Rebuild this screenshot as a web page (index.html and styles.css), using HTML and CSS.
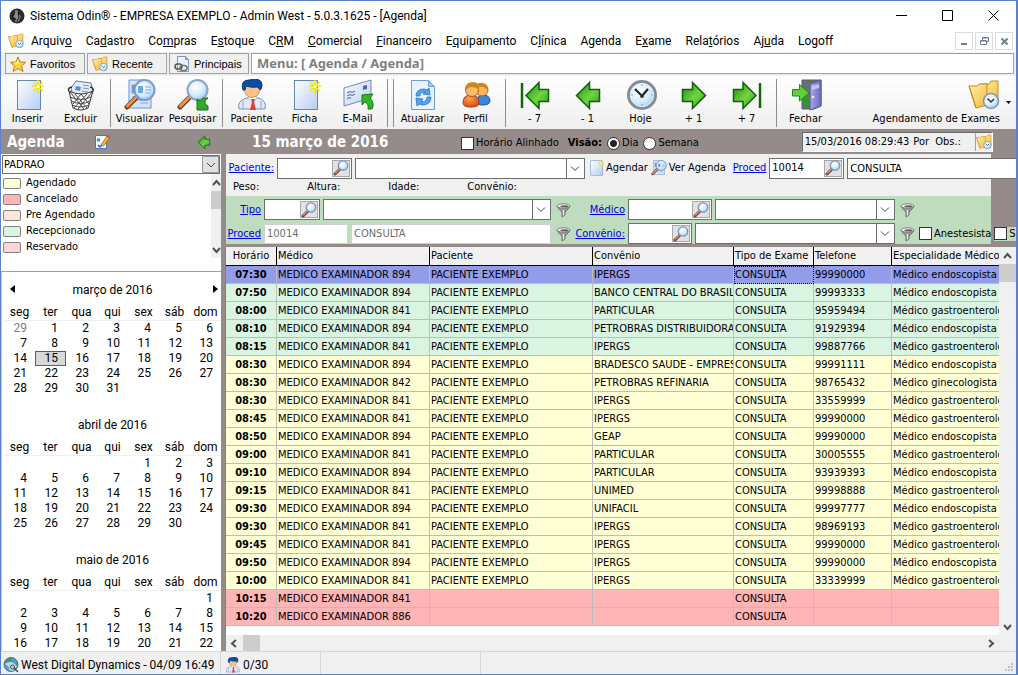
FILE: index.html
```
<!DOCTYPE html>
<html lang="pt-BR">
<head>
  <meta charset="UTF-8">
  <meta name="viewport" content="width=device-width, initial-scale=1.0">
  <title>Sistema Odin - Agenda</title>
  <link rel="stylesheet" href="styles.css">
</head>
<body>
  <!-- icons -->
  <svg class="sprite" width="0" height="0" aria-hidden="true">
    <defs>
      <linearGradient id="g-green" x1="0" y1="0" x2="1" y2="1">
        <stop offset="0" stop-color="#1f8a12"/><stop offset=".55" stop-color="#6fd640"/><stop offset="1" stop-color="#2f9a18"/>
      </linearGradient>
      <linearGradient id="g-page" x1="0" y1="0" x2="1" y2="1">
        <stop offset="0" stop-color="#fff"/><stop offset="1" stop-color="#b4cdf2"/>
      </linearGradient>
      <linearGradient id="g-folder" x1="0" y1="0" x2="1" y2="1">
        <stop offset="0" stop-color="#fff3a8"/><stop offset="1" stop-color="#f2b93a"/>
      </linearGradient>
      <linearGradient id="g-door" x1="0" y1="0" x2="1" y2="0">
        <stop offset="0" stop-color="#a9a7e6"/><stop offset="1" stop-color="#6f6cbb"/>
      </linearGradient>
      <radialGradient id="g-glass" cx=".4" cy=".35" r=".7">
        <stop offset="0" stop-color="#fff"/><stop offset=".6" stop-color="#d3ecfb"/><stop offset="1" stop-color="#96c6ee"/>
      </radialGradient>
      <radialGradient id="g-orange" cx=".4" cy=".3" r=".8">
        <stop offset="0" stop-color="#ffa04c"/><stop offset="1" stop-color="#cf4510"/>
      </radialGradient>
    </defs>

    <symbol id="i-new" viewBox="0 0 32 32">
      <rect x="5.500" y="1.500" width="23" height="29" fill="url(#g-page)" stroke="#6585b8"/>
      <path d="M26 1v13M20 7h12M21.500 3l9 9M30.500 3l-9 9" stroke="#f0e800" stroke-width="1.600"/>
      <circle cx="26" cy="7.500" r="1.500" fill="#fff"/>
    </symbol>
    <symbol id="i-trash" viewBox="0 0 32 32">
      <path d="M6 9l5-7 15 2 2 8-3 5H8z" fill="#e4edf9" stroke="#687790"/>
      <path d="M11 7l5 1-1 4-5-1z" fill="#4d90d8"/>
      <path d="M18 6l6 1M18 9l6 1M17 12l6 1" stroke="#7894b8"/>
      <path d="M4 12l4 17q8 4 15 0l5-17q-12 6-24 0z" fill="#fff" fill-opacity=".8" stroke="#333"/>
      <path d="M5 13l14 17M10 15l12 14M16 15l8 10M27 13L13 30M22 15L9 29M16 15l-8 10M5 18q11 5 21 0M6 22q10 5 19 0M7 26q9 4 17 0" fill="none" stroke="#4a4a4a"/>
      <path d="M4 12q-2-3 3-4M28 12q1-3-3-4" fill="none" stroke="#333" stroke-width="1.500"/>
    </symbol>
    <symbol id="i-view" viewBox="0 0 32 32">
      <path d="M5 1h17l5 5v23H5z" fill="#d4e5fa" stroke="#6d93cf"/>
      <path d="M8 6h3v8H8zM8 18h8M8 21h10M16 24h8M16 21h8" fill="#5b93da" stroke="#7da5dd"/>
      <path d="M3 28L13 18" stroke="#6d4630" stroke-width="5" stroke-linecap="round"/>
      <path d="M3.500 27L12.500 18" stroke="#ee9348" stroke-width="3" stroke-linecap="round"/>
      <circle cx="20.500" cy="11" r="10" fill="url(#g-glass)" fill-opacity=".85" stroke="#7d9cc9" stroke-width="2"/>
      <path d="M14 7h5v7h-5z" fill="#6fa8df"/><path d="M21 8h6M21 11h6M21 14h5" stroke="#84aede"/>
    </symbol>
    <symbol id="i-search" viewBox="0 0 32 32">
      <path d="M3 28L13 18" stroke="#6d4630" stroke-width="5" stroke-linecap="round"/>
      <path d="M3.500 27L12.500 18" stroke="#ee9348" stroke-width="3" stroke-linecap="round"/>
      <circle cx="20.500" cy="11" r="10" fill="url(#g-glass)" stroke="#8ba3cf" stroke-width="2"/>
      <path d="M20 31V20l3 2q3-4 8-3-4 2-3 6l3 2v4z" fill="#2eaa2a" stroke="#14741a"/>
    </symbol>
    <symbol id="i-lens" viewBox="0 0 16 16">
      <path d="M2 14l5-5" stroke="#6b4a43" stroke-width="3" stroke-linecap="round"/>
      <path d="M2 13.500l5-5" stroke="#d98c69" stroke-width="1.200"/>
      <circle cx="10" cy="5.500" r="4.700" fill="url(#g-glass)" stroke="#7d93c4" stroke-width="1.300"/>
    </symbol>
    <symbol id="i-doctor" viewBox="0 0 32 32">
      <path d="M3 30q-2-9 8-11h11q9 2 7 11z" fill="#e2eaf6" stroke="#7890b8"/>
      <path d="M12 19l4 5 5-5-1-3h-7z" fill="#fff" stroke="#93a7c6" stroke-width=".7"/>
      <path d="M15 20h4l-1 3 2 8h-6l2-8z" fill="#e3402c"/>
      <circle cx="16" cy="11" r="7.500" fill="#f8c28c" stroke="#b97b4a" stroke-width=".7"/>
      <path d="M7 11Q4 1 13 1q13-3 13 5 0 4-2 5l-2-3q-7 1-12-1l-1 4z" fill="#0b4da2" stroke="#08357a"/>
      <path d="M7 22v8M25 22v8" stroke="#8fa5c9"/>
    </symbol>
    <symbol id="i-mail" viewBox="0 0 32 32">
      <path d="M2 9l27-8v18L2 27z" fill="url(#g-page)" stroke="#7687b5"/>
      <path d="M5 14q2-2 4-1t4-1M5 17q2-2 4-1t4-1M5 20q2-2 4-1" fill="none" stroke="#4c5a80"/>
      <path d="M21 7l4-1v4l-4 1z" fill="#55649a"/>
      <path d="M20 16l11-1-3 4q5 5 2 11h-4q1-5-3-7l-3 3z" fill="#35b329" stroke="#147a15"/>
    </symbol>
    <symbol id="i-refresh" viewBox="0 0 32 32">
      <path d="M4.500 1.500h17l6 6v23h-23z" fill="#e9f2fd" stroke="#6f9bd6"/>
      <path d="M21.500 1.500v6h6z" fill="#a9c8ef" stroke="#6f9bd6"/>
      <path d="M9 17q0-7 8-7l3 1 2-2 1 7-7-1 2-2q-5 0-5 4zM24 18q0 8-9 8l-3-1-2 2-1-8 7 1-2 3q6 0 6-5z" fill="#55a4ea" stroke="#2a74c4" stroke-width=".8"/>
    </symbol>
    <symbol id="i-users" viewBox="0 0 32 32">
      <path d="M17 22q0-6 6-6 7 0 7 6 0 4-8 4-5 0-5-4z" fill="#3d86dd" stroke="#184f9c"/>
      <circle cx="22" cy="11" r="6" fill="#ffb45f" stroke="#a8641a"/>
      <path d="M16 8q1-5 7-4 6 1 5 9-2-5-6-5z" fill="#c98a1c"/>
      <path d="M3 24q0-8 8-8t8 8q0 4-8 4t-8-4z" fill="url(#g-orange)" stroke="#a53a10"/>
      <circle cx="12" cy="11" r="6.500" fill="#ffb96a" stroke="#a8641a"/>
      <path d="M5 9q1-6 8-6 7 0 6 8-3-3-7-3t-7 4z" fill="#c98a1c"/>
    </symbol>
    <symbol id="i-left" viewBox="0 0 32 32">
      <path d="M4.500 16.500L17.500 3.500v7h10v12h-10v7z" fill="url(#g-green)" stroke="#0f5f0d" stroke-width="1.500"/>
    </symbol>
    <symbol id="i-right" viewBox="0 0 32 32">
      <path d="M27.500 16.500L14.500 3.500v7h-10v12h10v7z" fill="url(#g-green)" stroke="#0f5f0d" stroke-width="1.500"/>
    </symbol>
    <symbol id="i-first" viewBox="0 0 32 32">
      <path d="M3 4v25" stroke="#0f6a0d" stroke-width="2.500"/>
      <path d="M7 16.500L20 3.500v7h9.500v12H20v7z" fill="url(#g-green)" stroke="#0f5f0d" stroke-width="1.500"/>
    </symbol>
    <symbol id="i-last" viewBox="0 0 32 32">
      <path d="M29 4v25" stroke="#0f6a0d" stroke-width="2.500"/>
      <path d="M25 16.500L12 3.500v7H2.500v12H12v7z" fill="url(#g-green)" stroke="#0f5f0d" stroke-width="1.500"/>
    </symbol>
    <symbol id="i-clock" viewBox="0 0 32 32">
      <circle cx="17" cy="16" r="13.500" fill="url(#g-glass)" stroke="#858c96" stroke-width="3"/>
      <circle cx="17" cy="16" r="11.500" fill="none" stroke="#e9f4fd"/>
      <path d="M10 10l7 7 6-7" fill="none" stroke="#222" stroke-width="2.200"/>
      <circle cx="17" cy="17" r="2" fill="#333"/>
      <path d="M17 5v2M17 25v2M6 16h2M26 16h2" stroke="#7aa6c9"/>
    </symbol>
    <symbol id="i-exit" viewBox="0 0 32 32">
      <path d="M12 1h19v26l-7 3H12z" fill="#66706d" stroke="#555c77"/>
      <path d="M13 18h8v8h-8z" fill="#2c9c26"/>
      <path d="M20 5l11-4v26l-11 4z" fill="url(#g-door)" stroke="#5654a0"/>
      <path d="M22 7l7-2v4l-7 2z" fill="#c3c2f2"/>
      <circle cx="23" cy="18" r="1.300" fill="#eee"/>
      <path d="M2.500 10.500h7v-5L19 14l-9.500 8v-5h-7z" fill="#5fd03a" stroke="#1c8a17"/>
    </symbol>
    <symbol id="i-folder" viewBox="0 0 32 32">
      <path d="M13 5h8l2-3h7v21l-17 3z" fill="url(#g-folder)" stroke="#c08a1e"/>
      <path d="M1 7h8l2-2h8v21L8 29z" fill="url(#g-folder)" stroke="#c08a1e"/>
      <path d="M1 7l7 22" stroke="#c08a1e"/>
      <circle cx="23" cy="22" r="7.500" fill="url(#g-glass)" stroke="#7f98b5" stroke-width="1.600"/>
      <path d="M19.500 19.500L23 23l3-3" fill="none" stroke="#333" stroke-width="1.500"/>
    </symbol>
    <symbol id="i-star" viewBox="0 0 16 16">
      <path d="M8 1l2 5 5.500.3-4 3.700 1.500 5.500L8 12.500 3 15.500 4.500 10 .5 6.300 6 6z" fill="#ffd43a" stroke="#b98208"/>
      <path d="M8 3l1 4-4 2 1-2-3-.5 3.500-.5z" fill="#fff3a0"/>
    </symbol>
    <symbol id="i-link" viewBox="0 0 16 16">
      <path d="M3.500.5h8l3 3v12h-11z" fill="#eef4fd" stroke="#7d98c6"/>
      <path d="M11.500.5v3h3z" fill="#a9c3e8" stroke="#7d98c6"/>
      <rect x="1" y="8" width="7" height="5" rx="2.500" fill="none" stroke="#555" stroke-width="1.500"/>
      <rect x="6" y="9.500" width="7" height="5" rx="2.500" fill="none" stroke="#777" stroke-width="1.500"/>
    </symbol>
    <symbol id="i-odin" viewBox="0 0 16 16">
      <circle cx="8" cy="8" r="7.500" fill="#2b2b2b"/>
      <path d="M6 2q4 0 3 4l3 2-2 5-4 1 1-4-3-1q3-3 2-7z" fill="#8d8d8d"/>
      <path d="M9 4l1 5-2 4M3 7l2 5" stroke="#111" fill="none"/>
    </symbol>
    <symbol id="i-globe" viewBox="0 0 16 16">
      <circle cx="8" cy="7.500" r="7" fill="#4f9ad2" stroke="#4a6f86"/>
      <path d="M3 3q4-3 6-1l-2 3-3 2zM9 8l5-2q1 4-3 7z" fill="#3f9a5a"/>
      <path d="M2 7q6-5 12 2l-4 5q-5 0-4-4z" fill="#dce3e6" fill-opacity=".85"/>
      <circle cx="9.500" cy="10" r="2" fill="none" stroke="#3a4a55"/>
      <path d="M11 11l4 4" stroke="#3a4a55" stroke-width="1.500"/>
    </symbol>
    <symbol id="i-funnel" viewBox="0 0 16 16">
      <path d="M1 4q1 3 5 6v5l3-2v-3q4-3 5-6z" fill="#9a9a9a" stroke="#5d5d5d" stroke-width=".8"/>
      <path d="M7.500 8v5.500" stroke="#f2f2f2" stroke-width="1.200"/>
      <ellipse cx="7.500" cy="4" rx="6.500" ry="2.200" fill="#f4f4f4" stroke="#6d6d6d" stroke-width=".8"/>
      <ellipse cx="8.500" cy="4.400" rx="4" ry="1.100" fill="#666"/>
    </symbol>
    <symbol id="i-edit" viewBox="0 0 16 16">
      <path d="M1.500 1.500h11v13h-11z" fill="#f4f8ff" stroke="#4a72c4"/>
      <path d="M3 4.500h3v3H3z" fill="#4a86df"/>
      <path d="M4 11l2 2 5-6" fill="none" stroke="#2f5fbd" stroke-width="1.500"/>
      <path d="M7 11l6-9 2.500 2-6 8z" fill="#f7b63a" stroke="#a86a16" stroke-width=".8"/>
      <path d="M13 2l1-1 2 2-1 1z" fill="#d63c3c"/>
    </symbol>
  </svg>

  <div class="window">
    <header class="titlebar">
      <svg class="icon16"><use href="#i-odin"/></svg>
      <h1 class="title">Sistema Odin® - EMPRESA EXEMPLO - Admin West - 5.0.3.1625 - [Agenda]</h1>
      <button class="winbtn" aria-label="Minimizar"><svg width="11" height="11"><path d="M0 5.500h11" stroke="#000"/></svg></button>
      <button class="winbtn" aria-label="Maximizar"><svg width="11" height="11"><path d="M.5.5h10v10H.5z" fill="none" stroke="#000"/></svg></button>
      <button class="winbtn" aria-label="Fechar"><svg width="11" height="11"><path d="M.5.5l10 10M10.500.5l-10 10" stroke="#000"/></svg></button>
    </header>

    <nav class="menubar">
      <svg class="icon16"><use href="#i-folder"/></svg>
      <a href="#">Arquiv<u>o</u></a>
      <a href="#">Ca<u>d</u>astro</a>
      <a href="#">Co<u>m</u>pras</a>
      <a href="#">E<u>s</u>toque</a>
      <a href="#">C<u>R</u>M</a>
      <a href="#"><u>C</u>omercial</a>
      <a href="#"><u>F</u>inanceiro</a>
      <a href="#">E<u>q</u>uipamento</a>
      <a href="#">C<u>l</u>ínica</a>
      <a href="#">A<u>g</u>enda</a>
      <a href="#">E<u>x</u>ame</a>
      <a href="#">Rela<u>t</u>órios</a>
      <a href="#">Aj<u>u</u>da</a>
      <a href="#">Logoff</a>
      <div class="mdi">
        <button aria-label="Minimizar agenda"><svg width="9" height="9"><path d="M1 7h6" stroke="#6f7f8f" stroke-width="2"/></svg></button>
        <button aria-label="Restaurar agenda"><svg width="9" height="9"><path d="M2.500 3V.5h6v4H7M.5 3.500h6v4h-6zM2 1h6M0 4h6" fill="none" stroke="#6f7f8f"/></svg></button>
        <button aria-label="Fechar agenda"><svg width="9" height="9"><path d="M1.500 1.500l6 6M7.500 1.500l-6 6" stroke="#6f7f8f" stroke-width="2"/></svg></button>
      </div>
    </nav>

    <div class="quickbar">
      <button><svg class="icon16"><use href="#i-star"/></svg>Favoritos</button>
      <button><svg class="icon16"><use href="#i-folder"/></svg>Recente</button>
      <button><svg class="icon16"><use href="#i-link"/></svg>Principais</button>
      <div class="path">Menu: [ Agenda / Agenda]</div>
    </div>

    <div class="toolbar">
      <button><svg class="icon32"><use href="#i-new"/></svg>Inserir</button>
      <button><svg class="icon32"><use href="#i-trash"/></svg>Excluir</button>
      <span class="sep"></span>
      <button><svg class="icon32"><use href="#i-view"/></svg>Visualizar</button>
      <button><svg class="icon32"><use href="#i-search"/></svg>Pesquisar</button>
      <span class="sep"></span>
      <button><svg class="icon32"><use href="#i-doctor"/></svg>Paciente</button>
      <button><svg class="icon32"><use href="#i-new"/></svg>Ficha</button>
      <button><svg class="icon32"><use href="#i-mail"/></svg>E-Mail</button>
      <span class="sep"></span>
      <span class="sep"></span>
      <button><svg class="icon32"><use href="#i-refresh"/></svg>Atualizar</button>
      <button><svg class="icon32"><use href="#i-users"/></svg>Perfil</button>
      <span class="sep"></span>
      <button><svg class="icon32"><use href="#i-first"/></svg>- 7</button>
      <button><svg class="icon32"><use href="#i-left"/></svg>- 1</button>
      <button><svg class="icon32"><use href="#i-clock"/></svg>Hoje</button>
      <button><svg class="icon32"><use href="#i-right"/></svg>+ 1</button>
      <button><svg class="icon32"><use href="#i-last"/></svg>+ 7</button>
      <span class="sep"></span>
      <button><svg class="icon32"><use href="#i-exit"/></svg>Fechar</button>
      <button class="tool-wide"><svg class="icon32"><use href="#i-folder"/></svg>Agendamento de Exames</button>
      <button class="tool-drop" aria-label="Mais"><svg width="5" height="3"><path d="M0 0h5L2.500 3z"/></svg></button>
    </div>

    <div class="main">
      <aside class="side">
        <div class="band">
          <h2>Agenda</h2>
          <button class="edit" aria-label="Editar"><svg class="icon16"><use href="#i-edit"/></svg></button>
          <button class="back" aria-label="Recolher"><svg class="icon16"><use href="#i-left"/></svg></button>
        </div>
        <select class="profile" aria-label="Agenda"><option>PADRAO</option></select>
        <div class="legend">
          <ul>
            <li><i class="agendado"></i>Agendado</li>
            <li><i class="cancelado"></i>Cancelado</li>
            <li><i class="pre"></i>Pre Agendado</li>
            <li><i class="recepcionado"></i>Recepcionado</li>
            <li><i class="reservado"></i>Reservado</li>
          </ul>
          <div class="vscroll">
            <svg width="9" height="17"><path d="M1 11l3.500-4L8 11" /></svg>
            <span class="thumb"></span>
            <svg class="end" width="9" height="17"><path d="M1 7l3.500 4L8 7" /></svg>
          </div>
        </div>
        <div class="calendars" id="calendars">
          <button class="prev" aria-label="Mês anterior"><svg width="5" height="8"><path d="M5 0v8L0 4z"/></svg></button>
          <button class="next" aria-label="Próximo mês"><svg width="5" height="8"><path d="M0 0v8l5-4z"/></svg></button>
        </div>
      </aside>

      <section class="agenda">
        <div class="band">
          <h2 class="date">15 março de 2016</h2>
          <label><input type="checkbox">Horário Alinhado</label>
          <b>Visão:</b>
          <label><input type="radio" name="visao" checked>Dia</label>
          <label><input type="radio" name="visao">Semana</label>
          <div class="stamp">
            <span>15/03/2016 08:29:43</span><span class="obs">Por&nbsp; Obs.:</span>
            <button aria-label="Histórico"><svg class="icon16"><use href="#i-folder"/></svg></button>
          </div>
        </div>

        <div class="form">
          <div class="row patient">
            <a href="#" class="w-pac">Paciente:</a>
            <span class="lookup w75"><input aria-label="Código do paciente"><button aria-label="Buscar paciente"><svg class="icon16"><use href="#i-lens"/></svg></button></span>
            <select class="combo w230" aria-label="Paciente"><option></option></select>
            <button class="act"><svg class="icon16"><use href="#i-new"/></svg>Agendar</button>
            <button class="act"><svg class="icon16"><use href="#i-view"/></svg>Ver Agenda</button>
            <a href="#">Proced</a>
            <span class="lookup w75"><input aria-label="Código do procedimento" value="10014"><button aria-label="Buscar procedimento"><svg class="icon16"><use href="#i-lens"/></svg></button></span>
            <input class="proc" aria-label="Procedimento" value="CONSULTA">
          </div>
          <div class="info">
            <span>Peso:</span><span>Altura:</span><span>Idade:</span><span>Convênio:</span>
          </div>
          <div class="filters">
            <div class="row">
              <a href="#" class="w-lab">Tipo</a>
              <span class="lookup w56"><input aria-label="Código do tipo"><button aria-label="Buscar tipo"><svg class="icon16"><use href="#i-lens"/></svg></button></span>
              <select class="combo w228" aria-label="Tipo"><option></option></select>
              <button class="funnel" aria-label="Filtrar tipo"><svg class="icon16"><use href="#i-funnel"/></svg></button>
              <a href="#" class="w-lab2">Médico</a>
              <span class="lookup w84"><input aria-label="Código do médico"><button aria-label="Buscar médico"><svg class="icon16"><use href="#i-lens"/></svg></button></span>
              <select class="combo w180" aria-label="Médico"><option></option></select>
              <button class="funnel" aria-label="Filtrar médico"><svg class="icon16"><use href="#i-funnel"/></svg></button>
            </div>
            <div class="row">
              <a href="#" class="w-lab">Proced</a>
              <input class="off w84" aria-label="Código" value="10014" disabled>
              <input class="off w200" aria-label="Descrição" value="CONSULTA" disabled>
              <button class="funnel" aria-label="Filtrar procedimento"><svg class="icon16"><use href="#i-funnel"/></svg></button>
              <a href="#" class="w-lab2">Convênio:</a>
              <span class="lookup w64"><input aria-label="Código do convênio"><button aria-label="Buscar convênio"><svg class="icon16"><use href="#i-lens"/></svg></button></span>
              <select class="combo w200" aria-label="Convênio"><option></option></select>
              <button class="funnel" aria-label="Filtrar convênio"><svg class="icon16"><use href="#i-funnel"/></svg></button>
              <label class="check"><input type="checkbox">Anestesista</label>
              <label class="check extra"><input type="checkbox">S</label>
            </div>
          </div>
        </div>

        <div class="grid">
          <div class="grid-view">
            <table>
              <colgroup>
                <col class="c-hora"><col class="c-med"><col class="c-pac"><col class="c-conv"><col class="c-tipo"><col class="c-tel"><col>
              </colgroup>
              <thead>
                <tr><th>Horário</th><th>Médico</th><th>Paciente</th><th>Convênio</th><th>Tipo de Exame</th><th>Telefone</th><th>Especialidade Médico</th></tr>
              </thead>
              <tbody id="rows"></tbody>
            </table>
          </div>
          <div class="vscroll">
            <svg width="9" height="17"><path d="M1 11l3.500-4L8 11" /></svg>
            <span class="thumb"></span>
            <svg class="end" width="9" height="17"><path d="M1 7l3.500 4L8 7" /></svg>
          </div>
        </div>
        <div class="hscroll">
          <svg width="17" height="9"><path d="M10 1L6 4.500 10 8"/></svg>
          <span class="thumb"></span>
          <svg class="end" width="17" height="9"><path d="M7 1l4 3.500L7 8"/></svg>
        </div>
      </section>
    </div>

    <footer class="status">
      <span class="s1"><svg class="icon16"><use href="#i-globe"/></svg>West Digital Dynamics - 04/09 16:49</span>
      <span class="s2"><svg class="icon16"><use href="#i-doctor"/></svg>0/30</span>
      <span class="s3"></span>
      <svg class="grip" width="9" height="9"><path d="M6 0h2v2H6zM3 3h2v2H3zM6 3h2v2H6zM0 6h2v2H0zM3 6h2v2H3zM6 6h2v2H6z" fill="#bfbfbf"/></svg>
    </footer>
  </div>

  <script src="agenda.js"></script>
</body>
</html>
```
FILE: styles.css
```
* {
  box-sizing: border-box;
}

body {
  margin: 0;
  font: 11px/14px "DejaVu Sans Condensed", "DejaVu Sans", sans-serif;
  color: #000;
}

button, input, select {
  font: inherit;
  color: inherit;
  margin: 0;
  padding: 0;
  border: 0;
  border-radius: 0;
  background: none;
}

a {
  color: #0000e6;
}

h1, h2 {
  margin: 0;
}

.sprite {
  position: absolute;
}

.icon16 {
  width: 16px;
  height: 16px;
  flex: none;
}

.icon32 {
  width: 32px;
  height: 32px;
}

.window {
  height: 100vh;
  display: flex;
  flex-direction: column;
  overflow: hidden;
  border: 1px solid #5b80cf;
  border-right-width: 2px;
  background: #fff;
}

/* title */
.titlebar {
  display: flex;
  align-items: center;
  flex: none;
  height: 29px;
  padding-left: 8px;
}

.title {
  flex: 1;
  padding-left: 5px;
  font: 12px/16px Roboto, "Open Sans", sans-serif;
}

.winbtn {
  width: 46px;
  height: 29px;
  display: flex;
  align-items: center;
  justify-content: center;
}

.menubar {
  display: flex;
  align-items: center;
  flex: none;
  gap: 14px;
  height: 22px;
  padding: 0 3px 0 7px;
  font: 12px/16px Roboto, "Open Sans", sans-serif;
}

.menubar > .icon16 {
  margin-right: -7px;
}

.menubar a {
  color: #000;
  text-decoration: none;
}

.mdi {
  display: flex;
  gap: 2px;
  margin-left: auto;
}

.mdi button {
  width: 18px;
  height: 18px;
  display: flex;
  align-items: center;
  justify-content: center;
  border: 1px solid #dcdcdc;
}

/* quick access */
.quickbar {
  display: flex;
  flex: none;
  gap: 2px;
  padding: 1px 2px 2px 4px;
  background: #f0f0f0;
}

.quickbar button {
  width: 80px;
  height: 21px;
  padding-left: 4px;
  display: flex;
  align-items: center;
  gap: 4px;
  border: 1px solid #a0a0a0;
  font: 11px/14px "Liberation Sans", Arial, sans-serif;
}

.path {
  flex: 1;
  padding: 1px 5px;
  border: 1px solid #a0a0a0;
  background: #fff;
  color: #808080;
  font: bold 13px/16px "Noto Sans", sans-serif;
}

/* toolbar */
.toolbar {
  display: flex;
  flex: none;
  height: 53px;
  padding-top: 3px;
  background: linear-gradient(#fff, #f0f0f0 90%);
}

.toolbar button {
  width: 53px;
  height: 47px;
  display: flex;
  flex-direction: column;
  align-items: center;
  justify-content: space-between;
  white-space: nowrap;
}

.toolbar .sep {
  width: 1px;
  height: 48px;
  margin: 0 2px 0 3px;
  background: #8c8c8c;
}

.toolbar .tool-wide {
  width: auto;
  margin-left: auto;
  align-items: flex-end;
}

.toolbar .tool-drop {
  width: 16px;
  justify-content: center;
}

.main {
  flex: 1;
  min-height: 0;
  display: flex;
}

.band {
  display: flex;
  align-items: center;
  flex: none;
  height: 25px;
  background: #958b8a;
}

.band h2 {
  color: #fff;
  font-size: 15px;
  line-height: 20px;
}

/* left panel */
.side {
  width: 222px;
  flex: none;
  display: flex;
  flex-direction: column;
  border-right: 2px solid #958b8a;
}

.side h2 {
  padding-left: 6px;
}

.side .edit {
  margin-left: 29px;
  height: 16px;
}

.side .back {
  margin: 0 9px 0 auto;
  height: 16px;
}

.profile, .combo {
  appearance: none;
  border: 1px solid #6e6e6e;
  background: #fff url("data:image/svg+xml,%3Csvg xmlns='http://www.w3.org/2000/svg' width='18' height='30'%3E%3Cpath d='M.5 0v30' stroke='%236e6e6e'/%3E%3Cpath d='M5 13l4 4 4-4' fill='none' stroke='%23444'/%3E%3C/svg%3E") right center no-repeat;
}

.profile {
  flex: none;
  height: 19px;
  margin: 1px 1px 0;
  padding-left: 1px;
  background-image: url("data:image/svg+xml,%3Csvg xmlns='http://www.w3.org/2000/svg' width='17' height='17'%3E%3Cpath d='M.5.5h16v16H.5z' fill='%23e1e1e1' stroke='%239a9a9a'/%3E%3Cpath d='M5 7l4 4 4-4' fill='none' stroke='%23444'/%3E%3C/svg%3E");
}

.legend {
  display: flex;
  flex: none;
  height: 84px;
}

.legend ul {
  flex: 1;
  margin: 0;
  padding: 1px 0 0 2px;
  list-style: none;
}

.legend li {
  display: flex;
  align-items: center;
  gap: 5px;
  height: 16px;
}

.legend i {
  width: 18px;
  height: 11px;
  border: 1px solid #808080;
  border-radius: 2px;
}

.agendado { background: #ffffd5; }
.cancelado { background: #ffb5b5; }
.pre { background: #ffe6d8; }
.recepcionado { background: #daf4e2; }
.reservado { background: #ffd5d5; }

.vscroll {
  display: flex;
  flex-direction: column;
  align-items: center;
  flex: none;
  width: 17px;
  background: #f0f0f0;
}

.legend .vscroll {
  width: 10px;
}

.vscroll .thumb {
  width: 100%;
  height: 18px;
  background: #cdcdcd;
}

.vscroll path, .hscroll path {
  fill: none;
  stroke: #505050;
  stroke-width: 2;
}

.vscroll .end {
  margin-top: auto;
}

.calendars {
  position: relative;
  flex: 1;
  min-height: 0;
  overflow: hidden;
  margin-top: 13px;
  padding: 7px 0 0 2px;
  border-top: 1px solid #a0a0a0;
  border-left: 1px solid #c8c8c8;
  font: 12px/15px Roboto, "Open Sans", sans-serif;
}

.calendars button {
  position: absolute;
  top: 13px;
  height: 8px;
  display: flex;
}

.prev {
  left: 8px;
}

.next {
  right: 3px;
}

.month {
  width: 217px;
  margin-bottom: 3px;
  border-spacing: 0;
  table-layout: fixed;
}

.month caption {
  height: 22px;
  line-height: 22px;
}

.month th {
  height: 20px;
  padding: 4px 0 0;
  border-bottom: 1px solid #f0f0f0;
  font-weight: normal;
}

.month td {
  height: 15px;
  padding: 0 8px 0 0;
  text-align: right;
}

.month .other {
  color: #808080;
}

.month .today {
  background: #d9d9d9;
  outline: 1px solid #0f6fd0;
  outline-offset: -1px;
}

/* right panel */
.agenda {
  flex: 1;
  min-width: 0;
  display: flex;
  flex-direction: column;
  background: #958b8a;
}

.agenda .band {
  padding: 0 23px 0 29px;
}

.agenda .date {
  width: 209px;
}

.band label, .check {
  display: flex;
  align-items: center;
  gap: 2px;
}

.band label, .band b {
  padding-top: 3px;
}

.band b {
  margin: 0 5px 0 9px;
}

.band label + label {
  margin-left: 5px;
}

input[type="checkbox"], input[type="radio"] {
  appearance: none;
  width: 13px;
  height: 13px;
  flex: none;
  border: 1px solid #333;
  background: #fff;
}

input[type="radio"] {
  border-radius: 50%;
}

input[type="radio"]:checked {
  background: radial-gradient(circle, #222 3px, #fff 4px);
}

.stamp {
  display: flex;
  height: 20px;
  margin-left: auto;
  padding-left: 2px;
  border: 1px solid;
  border-color: #6a6a6a #fff #fff #6a6a6a;
  background: #f0f0f0;
  line-height: 18px;
  white-space: nowrap;
}

.stamp .obs {
  padding: 0 14px 0 4px;
}

.stamp button {
  display: flex;
  align-items: center;
  border-left: 1px solid #a0a0a0;
}

.form {
  flex: none;
  margin: 0 25px 0 3px;
  background: #f0f0f0;
}

.row {
  display: flex;
  align-items: center;
  gap: 3px;
  height: 21px;
}

.row > * {
  flex: none;
}

.patient {
  height: 26px;
  padding: 2px 0 0 2px;
}

.patient .proc {
  flex: 1 0 auto;
  width: 60px;
  margin-right: -27px;
}

.row a {
  text-align: right;
}

.lookup, .proc {
  height: 21px;
  border: 1px solid #6e6e6e;
  background: #fff;
  padding-left: 2px;
}

.lookup {
  display: flex;
  align-items: center;
}

.lookup input {
  flex: 1;
  min-width: 0;
}

.lookup button {
  width: 18px;
  height: 17px;
  margin-right: 1px;
  display: flex;
  align-items: center;
  justify-content: center;
  border: 1px solid #a8a8a8;
  background: #e1e1e1;
}

.combo {
  height: 21px;
}

.act {
  display: flex;
  align-items: center;
  gap: 2px;
}

.act + .act + a {
  margin-left: 4px;
}

.w-pac { width: 46px; }
.w-lab { width: 35px; }
.w-lab2 { width: 50px; }
.w56 { width: 56px; }
.w64 { width: 64px; }
.w75 { width: 75px; }
.w84 { width: 84px; }
.w180 { width: 180px; }
.w200 { width: 200px; }
.w228 { width: 228px; }
.w230 { width: 230px; }

.info {
  display: flex;
  gap: 48px;
  height: 16px;
  padding-left: 7px;
}

.filters {
  display: flex;
  flex-direction: column;
  gap: 3px;
  padding-top: 3px;
  background: #bfdcbf;
}

.off {
  height: 20px;
  padding-left: 2px;
  border: 1px solid #d0d0d0;
  background: #fff;
  color: #6d6d6d;
}

.funnel {
  width: 18px;
  height: 16px;
  padding-left: 2px;
}

.funnel svg {
  display: block;
}

.extra {
  background: #bfdcbf;
}

/* appointments */
.grid {
  flex: 1;
  min-height: 0;
  display: flex;
  margin: 3px 0 0 2px;
  border-left: 1px solid #808080;
  background: #fff;
}

.grid-view {
  flex: 1;
  min-width: 0;
  overflow: hidden;
}

.grid table {
  width: 100%;
  table-layout: fixed;
  border-spacing: 0;
}

.c-hora { width: 51px; }
.c-med { width: 153px; }
.c-pac { width: 163px; }
.c-conv { width: 141px; }
.c-tipo { width: 80px; }
.c-tel { width: 78px; }

.grid th, .grid td {
  height: 18px;
  padding: 0 0 0 1px;
  overflow: hidden;
  white-space: nowrap;
  text-align: left;
  border-right: 1px solid #bdbdbd;
  border-bottom: 1px solid #bdbdbd;
}

.grid th {
  height: 19px;
  background: #f0f0f0;
  font-weight: normal;
  border-color: #000;
}

.grid th:last-child, .grid td:last-child {
  border-right: 0;
}

.grid th:first-child, .grid td:first-child {
  padding: 0;
  text-align: center;
}

.grid td:first-child {
  font-weight: bold;
}

.grid .selecionado {
  background: #929ce9;
}

.grid .foco {
  outline: 1px dotted #000;
  outline-offset: -1px;
}

.hscroll {
  display: flex;
  align-items: center;
  flex: none;
  height: 16px;
  margin-left: 3px;
  padding-right: 17px;
  background: #f0f0f0;
}

.hscroll .thumb {
  width: 17px;
  height: 100%;
  background: #cdcdcd;
}

.hscroll .end {
  margin-left: auto;
}

/* status bar */
.status {
  display: flex;
  flex: none;
  height: 23px;
  border-top: 1px solid #d7d7d7;
  background: #f0f0f0;
  font: 12px/16px Roboto, "Open Sans", sans-serif;
}

.status span {
  display: flex;
  align-items: center;
  gap: 2px;
  padding: 3px 0 0 2px;
  border-right: 1px solid #d7d7d7;
}

.status .s1 { width: 220px; }
.status .s2 { width: 100px; padding-left: 4px; }
.status .s3 { width: 160px; }

.grip {
  margin: auto 2px 2px auto;
}
```
FILE: agenda.js
```
// horário, médico, convênio, telefone, especialidade, situação
const E = 'Médico endoscopista';
const G = 'Médico gastroenterologista';
const agenda = [
  ['07:30', 894, 'IPERGS', '99990000', E, 'selecionado'],
  ['07:50', 894, 'BANCO CENTRAL DO BRASIL', '99993333', E, 'recepcionado'],
  ['08:00', 841, 'PARTICULAR', '95959494', G, 'recepcionado'],
  ['08:10', 894, 'PETROBRAS DISTRIBUIDORA', '91929394', E, 'recepcionado'],
  ['08:15', 841, 'IPERGS', '99887766', G, 'recepcionado'],
  ['08:30', 894, 'BRADESCO SAUDE - EMPRESA', '99991111', E, 'agendado'],
  ['08:30', 842, 'PETROBRAS REFINARIA', '98765432', 'Médico ginecologista / obstetra', 'agendado'],
  ['08:30', 841, 'IPERGS', '33559999', G, 'agendado'],
  ['08:45', 841, 'IPERGS', '99990000', G, 'agendado'],
  ['08:50', 894, 'GEAP', '99990000', E, 'agendado'],
  ['09:00', 841, 'PARTICULAR', '30005555', G, 'agendado'],
  ['09:10', 894, 'PARTICULAR', '93939393', E, 'agendado'],
  ['09:15', 841, 'UNIMED', '99998888', G, 'agendado'],
  ['09:30', 894, 'UNIFACIL', '99997777', E, 'agendado'],
  ['09:30', 841, 'IPERGS', '98969193', G, 'agendado'],
  ['09:45', 841, 'IPERGS', '99990000', G, 'agendado'],
  ['09:50', 894, 'IPERGS', '99990000', E, 'agendado'],
  ['10:00', 841, 'IPERGS', '33339999', G, 'agendado'],
  ['10:15', 841, '', '', '', 'cancelado'],
  ['10:20', 886, '', '', '', 'cancelado']
];

document.getElementById('rows').innerHTML = agenda.map(([hora, med, conv, tel, esp, sit]) => `
  <tr class="${sit}">
    <td>${hora}</td>
    <td>MEDICO EXAMINADOR ${med}</td>
    <td>${conv ? 'PACIENTE EXEMPLO' : ''}</td>
    <td>${conv}</td>
    <td${sit === 'selecionado' ? ' class="foco"' : ''}>CONSULTA</td>
    <td>${tel}</td>
    <td>${esp}</td>
  </tr>`).join('');

const meses = { 3: 'março', 4: 'abril', 5: 'maio' };
const dias = ['seg', 'ter', 'qua', 'qui', 'sex', 'sáb', 'dom'];

function calendario(ano, mes, semanas, hoje) {
  const inicio = (new Date(ano, mes - 1, 1).getDay() + 6) % 7;
  const total = new Date(ano, mes, 0).getDate();
  const anterior = new Date(ano, mes - 1, 0).getDate();
  let linhas = '';

  for (let s = 0; s < semanas; s++) {
    linhas += '<tr>';
    for (let d = 0; d < 7; d++) {
      const n = s * 7 + d - inicio + 1;
      if (n < 1 && hoje) {
        linhas += `<td class="other">${anterior + n}</td>`;
      } else if (n < 1 || n > total) {
        linhas += '<td></td>';
      } else {
        linhas += `<td${n === hoje ? ' class="today"' : ''}>${n}</td>`;
      }
    }
    linhas += '</tr>';
  }

  return `<table class="month">
    <caption>${meses[mes]} de ${ano}</caption>
    <thead><tr>${dias.map(d => `<th>${d}</th>`).join('')}</tr></thead>
    <tbody>${linhas}</tbody>
  </table>`;
}

// the last month only shows the weeks that fit
document.getElementById('calendars').insertAdjacentHTML('beforeend',
  calendario(2016, 3, 6, 15) + calendario(2016, 4, 6) + calendario(2016, 5, 4));
```
